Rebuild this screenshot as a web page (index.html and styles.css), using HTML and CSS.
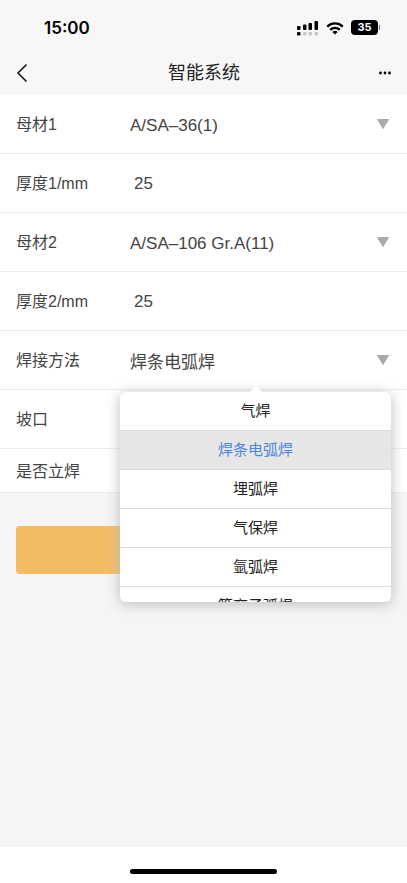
FILE: index.html
```html
<!DOCTYPE html>
<html lang="zh-CN">

<head>
    <meta charset="UTF-8" />
    <meta name="viewport" content="width=device-width, initial-scale=1" />
    <title>智能系统</title>
    <link rel="stylesheet" href="styles.css">
</head>

<body>

    <div class="status-bar">
        <span class="status-time">15:00</span>
        <div class="status-icons">
            <svg class="icon-signal" viewBox="0 0 22 16" aria-hidden="true">
                <g fill="#000">
                    <rect x="0" y="6" width="3.500" height="4" rx="1" />
                    <rect x="6" y="4.500" width="3.500" height="5.500" rx="1" />
                    <rect x="11.500" y="3" width="3.500" height="7" rx="1" />
                    <rect x="17.500" y="1" width="3.500" height="9" rx="1" />
                    <rect x="0" y="12" width="3.500" height="3.500" rx="1" />
                </g>
                <g fill="#c8c8c8">
                    <rect x="6" y="12" width="3.500" height="3.500" rx="1" />
                    <rect x="11.500" y="12" width="3.500" height="3.500" rx="1" />
                    <rect x="17.500" y="12" width="3.500" height="3.500" rx="1" />
                </g>
            </svg>
            <svg class="icon-wifi" viewBox="0 0 18 14" aria-hidden="true">
                <g fill="none" stroke="#000" stroke-width="2.3">
                    <path d="M1.2 5.6a11.2 11.2 0 0 1 15.6 0" />
                    <path d="M4.2 8.8a6.9 6.9 0 0 1 9.6 0" />
                </g>
                <path d="M9 13.6 6.4 11a3.7 3.7 0 0 1 5.2 0z" />
            </svg>
            <span class="battery">35</span>
        </div>
    </div>

    <header class="nav-bar">
        <button class="nav-btn" type="button" aria-label="返回">
            <svg class="icon-back" viewBox="0 0 12 20" aria-hidden="true">
                <path d="M10.5 1.5 2 10l8.500 8.500" fill="none" stroke="#111" stroke-width="1.500" />
            </svg>
        </button>
        <h1 class="nav-title">智能系统</h1>
        <button class="nav-btn nav-more" type="button" aria-label="更多">
            <svg class="icon-more" viewBox="0 0 14 4" aria-hidden="true">
                <circle cx="2.500" cy="2" r="1.400" />
                <circle cx="7" cy="2" r="1.400" />
                <circle cx="11.500" cy="2" r="1.400" />
            </svg>
        </button>
    </header>

    <main>
        <form class="weld-form">
            <div class="row">
                <label class="row-label" for="base1">母材1</label>
                <select class="row-value row-latin" id="base1">
                    <option>A/SA–36(1)</option>
                </select>
                <svg class="arrow" viewBox="0 0 14 12" aria-hidden="true"><path d="M1.500 1.500h11L7 10.500z" /></svg>
            </div>
            <div class="row">
                <label class="row-label" for="thick1">厚度1/mm</label>
                <input class="row-value row-latin row-input" id="thick1" type="text" inputmode="decimal" value="25" />
            </div>
            <div class="row">
                <label class="row-label" for="base2">母材2</label>
                <select class="row-value row-latin" id="base2">
                    <option>A/SA–106 Gr.A(11)</option>
                </select>
                <svg class="arrow" viewBox="0 0 14 12" aria-hidden="true"><path d="M1.500 1.500h11L7 10.500z" /></svg>
            </div>
            <div class="row">
                <label class="row-label" for="thick2">厚度2/mm</label>
                <input class="row-value row-latin row-input" id="thick2" type="text" inputmode="decimal" value="25" />
            </div>
            <div class="row">
                <label class="row-label" for="method">焊接方法</label>
                <button class="row-value" id="method" type="button" aria-haspopup="listbox" aria-expanded="true">焊条电弧焊</button>
                <svg class="arrow" viewBox="0 0 14 12" aria-hidden="true"><path d="M1.500 1.500h11L7 10.500z" /></svg>
                <div class="dropdown" id="methodMenu">
                    <div class="dropdown-list" role="listbox" aria-label="焊接方法">
                        <button class="option" type="button" role="option">气焊</button>
                        <button class="option selected" type="button" role="option" aria-selected="true">焊条电弧焊</button>
                        <button class="option" type="button" role="option">埋弧焊</button>
                        <button class="option" type="button" role="option">气保焊</button>
                        <button class="option" type="button" role="option">氩弧焊</button>
                        <button class="option" type="button" role="option">等离子弧焊</button>
                    </div>
                </div>
            </div>
            <div class="row">
                <span class="row-label">坡口</span>
            </div>
            <div class="row row-short">
                <span class="row-label">是否立焊</span>
            </div>
        </form>

        <div class="actions">
            <button class="submit-btn" type="button" aria-label="提交"></button>
        </div>
    </main>

    <footer class="home-bar">
        <div class="home-indicator"></div>
    </footer>

    <script>
        const method = document.getElementById("method");
        const menu = document.getElementById("methodMenu");
        const options = menu.querySelectorAll(".option");

        method.addEventListener("click", () => {
            menu.hidden = !menu.hidden;
            method.setAttribute("aria-expanded", String(!menu.hidden));
        });

        options.forEach(option => {
            option.addEventListener("click", () => {
                options.forEach(o => {
                    o.classList.toggle("selected", o === option);
                    o.setAttribute("aria-selected", String(o === option));
                });
                method.textContent = option.textContent;
                menu.hidden = true;
                method.setAttribute("aria-expanded", "false");
            });
        });
    </script>

</body>

</html>
```

FILE: styles.css
```css
* {
    box-sizing: border-box;
}

body {
    margin: 0;
    min-height: 100vh;
    display: flex;
    flex-direction: column;
    background: #f5f5f5;
    color: #444;
    font-family: "Liberation Sans", "Noto Sans CJK SC", sans-serif;
    font-size: 16px;
}

button,
input,
select {
    font-family: inherit;
    color: inherit;
    border: none;
    background: none;
    margin: 0;
    padding: 0;
}

button {
    cursor: pointer;
}

.status-bar {
    display: flex;
    justify-content: space-between;
    align-items: center;
    height: 50px;
    padding: 5px 29px 0 44px;
    background: #f7f7f7;
}

.status-time {
    color: #000;
    font-family: Inter, sans-serif;
    font-size: 17px;
    font-weight: 600;
}

.status-icons {
    display: flex;
    align-items: center;
    gap: 7px;
}

.icon-signal {
    width: 22px;
    height: 16px;
}

.icon-wifi {
    width: 18px;
    height: 14px;
}

.battery {
    position: relative;
    width: 27px;
    height: 15px;
    border-radius: 4px;
    background: #000;
    color: #fff;
    font-family: Inter, sans-serif;
    font-size: 11px;
    font-weight: 700;
    line-height: 15px;
    text-align: center;
}

.battery::after {
    content: "";
    position: absolute;
    top: 5px;
    right: -2px;
    width: 1px;
    height: 5px;
    background: #777;
}

.nav-bar {
    display: flex;
    justify-content: space-between;
    align-items: center;
    height: 45px;
    padding: 0 15px 0 16px;
    background: #f7f7f7;
}

.nav-btn {
    display: flex;
    align-items: center;
    width: 40px;
    height: 40px;
}

.nav-more {
    justify-content: flex-end;
}

.icon-back {
    width: 12px;
    height: 20px;
}

.icon-more {
    width: 14px;
    height: 4px;
}

.nav-title {
    margin: 0;
    padding-bottom: 3px;
    color: #222;
    font-size: 18px;
    font-weight: 400;
}

main {
    flex: 1;
}

.weld-form {
    background: #fff;
}

.row {
    position: relative;
    display: flex;
    align-items: center;
    height: 59px;
    padding: 0 17px 0 16px;
    border-bottom: 1px solid #ececec;
}

.row-short {
    height: 44px;
}

.row-label {
    width: 114px;
    padding-bottom: 2px;
    font-size: 16px;
}

.row-value {
    flex: 1;
    min-width: 0;
    height: 40px;
    font-size: 17px;
    text-align: left;
    appearance: none;
    outline: none;
}

.row-latin {
    padding-top: 2px;
}

.row-input {
    padding-left: 4px;
}

.arrow {
    width: 14px;
    height: 12px;
    fill: #aaa;
    stroke: #aaa;
    stroke-width: 1px;
    stroke-linejoin: round;
    pointer-events: none;
}

.dropdown {
    position: absolute;
    z-index: 2;
    top: 61px;
    left: 120px;
    right: 16px;
    border-radius: 6px;
    background: #fff;
    box-shadow: 0 2px 14px #bbb;
}

.dropdown[hidden] {
    display: none;
}

.dropdown::before {
    content: "";
    position: absolute;
    top: -6px;
    left: 50%;
    margin-left: -7px;
    border: 7px solid transparent;
    border-top: none;
    border-bottom-color: #fff;
}

.dropdown-list {
    height: 210px;
    overflow-y: auto;
    border-radius: 6px;
    scrollbar-width: none;
}

.option {
    display: block;
    width: 100%;
    height: 39px;
    padding-bottom: 3px;
    border-bottom: 1px solid #ddd;
    color: #222;
    font-size: 15px;
    text-align: center;
}

.option.selected {
    background: #e6e6e6;
    color: #4a86e0;
}

.actions {
    padding: 33px 16px;
}

.submit-btn {
    display: block;
    width: 100%;
    height: 48px;
    border-radius: 4px;
    background: #f2bd62;
}

.home-bar {
    display: flex;
    justify-content: center;
    align-items: center;
    height: 36px;
    padding-top: 12px;
    background: #fff;
}

.home-indicator {
    width: 36%;
    height: 5px;
    border-radius: 3px;
    background: #000;
}
```
